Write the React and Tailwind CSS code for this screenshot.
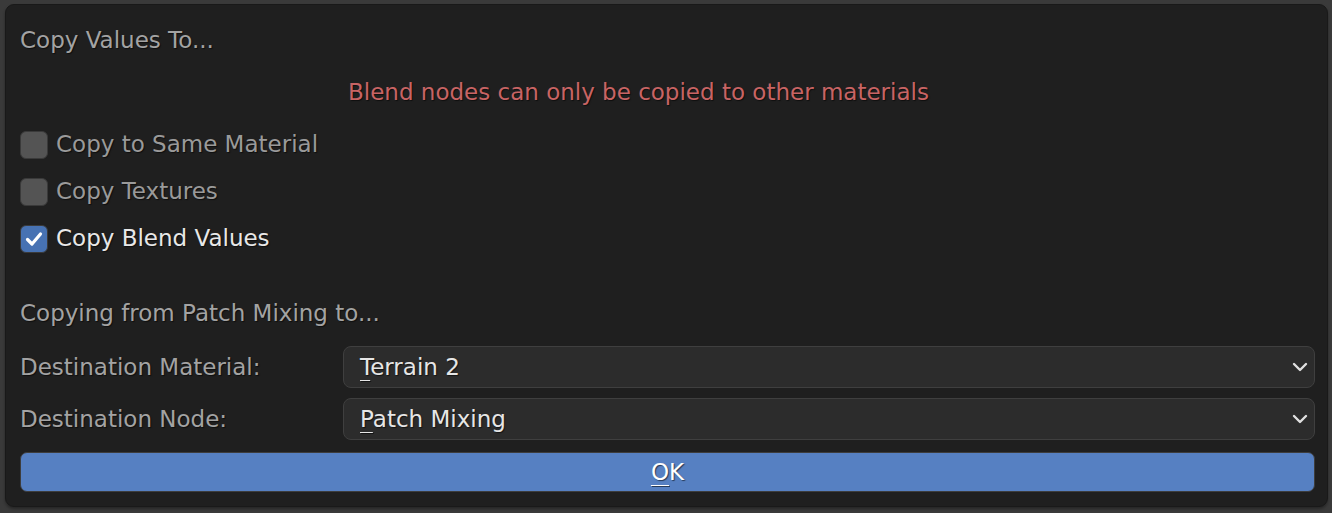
import React from "react";

const font = { fontFamily: '"DejaVu Sans", "Liberation Sans", sans-serif' };
const shadow = "[text-shadow:1px_1px_1px_rgba(0,0,0,0.55)]";

const Checkbox = ({ checked, label }) => (
    <div className="h-[47px] flex items-center">
        <div
            className={`w-[28px] h-[28px] rounded-[6px] border-[1.5px] flex items-center justify-center ${
                checked ? "bg-[#4772b3] border-[#3a3a3a]" : "bg-[#545454] border-[#3a3a3a]"
            }`}
        >
            {checked && (
                <svg width="18" height="18" viewBox="0 0 18 18">
                    <path d="M2.5 9.5 L7 14 L15.5 4" fill="none" stroke="#ffffff" strokeWidth="3.2" strokeLinecap="round" strokeLinejoin="round" />
                </svg>
            )}
        </div>
        <span className={`ml-[8px] text-[23px] ${shadow} ${checked ? "text-[#e8e8e8]" : "text-[#9a9a9a]"}`}>{label}</span>
    </div>
);

const Dropdown = ({ label, value }) => (
    <div className="flex items-center h-[42px]">
        <div className={`w-[323px] text-[23px] text-[#a3a3a3] ${shadow}`}>{label}</div>
        <div className="flex-1 h-full flex items-center justify-between bg-[#2c2c2c] border border-[#3f3f3f] rounded-[8px] pl-[16px] pr-[6px]">
            <span className={`text-[23px] text-[#e6e6e6] ${shadow}`}>
                <span className="underline decoration-1 underline-offset-[5px]">{value[0]}</span>
                {value.slice(1)}
            </span>
            <svg width="16" height="12" viewBox="0 0 16 12">
                <path d="M2 3 L8 9 L14 3" fill="none" stroke="#e0e0e0" strokeWidth="2.4" strokeLinecap="round" strokeLinejoin="round" />
            </svg>
        </div>
    </div>
);

export default function App() {
    return (
        <div className="w-[1332px] h-[513px] bg-[#3a3a3a] pt-[4px] pl-[5px] pr-[4px]" style={font}>
            <div className="h-[503px] bg-[#1f1f1f] rounded-[9px] border border-[#191919] pt-[15px] pl-[14px] pr-[12px] shadow-[0_2px_3px_rgba(0,0,0,0.35)]">
                <div className={`h-[40px] flex items-center text-[23px] text-[#a3a3a3] ${shadow}`}>Copy Values To...</div>

                <div className={`mt-[12px] h-[40px] flex items-center pl-[328px] text-[23px] text-[#c86464] ${shadow}`}>
                    Blend nodes can only be copied to other materials
                </div>

                <div className="mt-[9px]">
                    <Checkbox label="Copy to Same Material" />
                    <Checkbox label="Copy Textures" />
                    <Checkbox label="Copy Blend Values" checked />
                </div>

                <div className={`mt-[31px] h-[40px] flex items-center text-[23px] text-[#a3a3a3] ${shadow}`}>
                    Copying from Patch Mixing to...
                </div>

                <div className="mt-[13px]">
                    <Dropdown label="Destination Material:" value="Terrain 2" />
                </div>
                <div className="mt-[10px]">
                    <Dropdown label="Destination Node:" value="Patch Mixing" />
                </div>

                <button className="mt-[12px] w-full h-[40px] bg-[#5680c2] border border-[#3d3d3d] rounded-[7px] flex items-center justify-center">
                    <span className={`text-[23px] text-white ${shadow}`}>
                        <span className="underline decoration-1 underline-offset-[5px]">O</span>K
                    </span>
                </button>
            </div>
        </div>
    );
}
